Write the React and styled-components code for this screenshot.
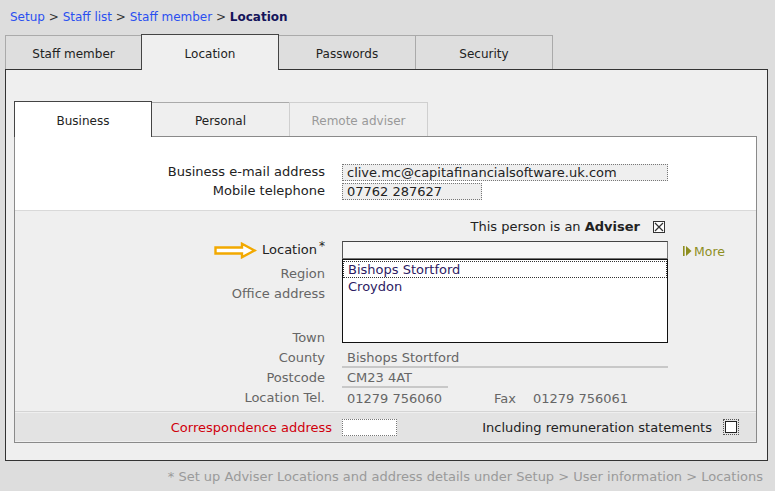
import React from 'react';
import styled, { createGlobalStyle } from 'styled-components';

const GlobalStyle = createGlobalStyle`
  html, body {
    margin: 0;
    padding: 0;
    background: #dddddd;
  }
  body {
    font-family: "DejaVu Sans", Verdana, sans-serif;
    font-size: 13px;
    color: #222;
  }
`;

const Page = styled.div`
  width: 775px;
  height: 491px;
  box-sizing: border-box;
  padding: 0 7px 0 5px;
  display: flex;
  flex-direction: column;
`;

const Crumbs = styled.div`
  padding: 9px 0 0 5px;
  height: 25px;
  line-height: 16px;
  font-size: 12px;
  color: #333;
  a {
    color: #2a4ff0;
    text-decoration: none;
  }
  b {
    color: #14145a;
  }
`;

const TabRow = styled.div`
  display: flex;
  align-items: flex-end;
  height: 36px;
  margin-bottom: -1px;
`;

const Tab = styled.div`
  box-sizing: border-box;
  width: ${p => p.$w || 137}px;
  height: ${p => (p.$active ? 36 : 34)}px;
  margin-bottom: ${p => (p.$active ? 0 : 1)}px;
  padding-top: ${p => (p.$active ? 2 : 2)}px;
  display: flex;
  align-items: center;
  justify-content: center;
  font-size: 12px;
  border: 1px solid ${p => (p.$active ? '#444' : p.$disabled ? '#cfcfcf' : '#aaa')};
  border-bottom: none;
  margin-left: ${p => (p.$first ? 0 : -1)}px;
  background: ${p => p.$bg};
  color: ${p => (p.$disabled ? '#999' : '#222')};
  position: relative;
  z-index: ${p => (p.$active ? 2 : 1)};
`;

const OuterPanel = styled.div`
  box-sizing: border-box;
  height: 392px;
  border: 1px solid #333;
  background: #efefef;
  padding: 31px 10px 17px 8px;
  display: flex;
  flex-direction: column;
`;

const InnerPanel = styled.div`
  border: 1px solid #8a8a8a;
  background: #efefef;
  display: flex;
  flex-direction: column;
  flex: 1;
`;

const WhiteSection = styled.div`
  background: #fff;
  padding: 25px 0 12px;
  border-bottom: 1px solid #d9d9d9;
  display: flex;
  flex-direction: column;
  gap: 2px;
`;

const GraySection = styled.div`
  padding: 6px 0 3px;
  border-bottom: 1px solid #d4d4d4;
  display: flex;
  flex-direction: column;
`;

const Row = styled.div`
  display: grid;
  grid-template-columns: 310px 326px 1fr;
  column-gap: 17px;
  align-items: ${p => p.$align || 'center'};
  height: ${p => p.$h || 20}px;
  margin-bottom: ${p => p.$mb || 0}px;
`;

const Label = styled.div`
  text-align: right;
  line-height: 20px;
  color: ${p => p.$color || '#222'};
`;

const Marked = styled.span`
  position: relative;
  sup {
    font-size: 12px;
    line-height: 0;
    vertical-align: 0;
    position: relative;
    top: -4px;
    margin-left: 2px;
  }
`;

const Field = styled.div`
  position: relative;
  display: flex;
  align-items: center;
  height: 100%;
`;

const TextBox = styled.div`
  box-sizing: border-box;
  width: ${p => p.$w}px;
  height: 17px;
  line-height: 15px;
  padding: 0 4px;
  border: 1px dotted #777;
  background: ${p => p.$bg || '#efefef'};
  color: #222;
  white-space: nowrap;
`;

const SelectBox = styled.div`
  box-sizing: border-box;
  width: 326px;
  height: 18px;
  border: 1px solid #777;
  border-top-color: #444;
  border-left-color: #555;
  background: #f6f6f6;
`;

const Listbox = styled.div`
  position: absolute;
  top: 19px;
  left: 0;
  z-index: 3;
  box-sizing: border-box;
  width: 326px;
  height: 84px;
  padding-top: 1px;
  background: #fff;
  border: 1px solid #111;
  color: #2d1b63;
`;

const Option = styled.div`
  height: 17px;
  line-height: 17px;
  padding: 0 5px;
  outline: ${p => (p.$focus ? '1px dotted #333' : 'none')};
  outline-offset: -1px;
`;

const Value = styled.div`
  box-sizing: border-box;
  width: ${p => p.$w || 326}px;
  line-height: 17px;
  padding: 0 5px;
  color: #666;
  border-bottom: ${p => (p.$line ? '2px solid #c8c8c8' : 'none')};
  white-space: nowrap;
`;

const TelLine = styled.div`
  display: flex;
  align-items: center;
  color: #666;
  padding-left: 5px;
  white-space: nowrap;
  span:first-child {
    width: 147px;
  }
  span:nth-child(2) {
    width: 39px;
  }
`;

const AdviserLine = styled.div`
  grid-column: 1 / 3;
  justify-self: end;
  display: flex;
  align-items: center;
  gap: 13px;
  margin-right: 3px;
  line-height: 20px;
`;

const XBox = styled.span`
  width: 12px;
  height: 12px;
  display: inline-flex;
`;

const More = styled.div`
  display: flex;
  align-items: center;
  gap: 2px;
  color: #8e8e1e;
  margin-left: -2px;
  padding-top: 2px;
  font-size: 12.5px;
`;

const Arrow = styled.svg`
  position: absolute;
  right: calc(100% + 5px);
  top: 0px;
`;

const Band = styled.div`
  height: 28px;
  margin-top: 1px;
  background: #e3e3e3;
  display: flex;
  align-items: center;
  padding-right: 17px;
`;

const BandLabel = styled.div`
  width: 317px;
  text-align: right;
  color: #d0000c;
  margin-right: 10px;
`;

const Spacer = styled.div`
  flex: 1;
`;

const CheckBox = styled.div`
  box-sizing: border-box;
  width: 16px;
  height: 16px;
  margin-left: 11px;
  border: 1px dotted #555;
  padding: 1px;
  div {
    width: 100%;
    height: 100%;
    box-sizing: border-box;
    border: 1px solid #222;
    background: #fff;
  }
`;

const Footer = styled.div`
  margin-top: 8px;
  text-align: right;
  padding-right: 5px;
  line-height: 16px;
  color: #9a9a9a;
`;

const outerTabs = ['Staff member', 'Location', 'Passwords', 'Security'];

export default function App() {
  return (
    <>
      <GlobalStyle />
      <Page>
        <Crumbs>
          <a href="#s">Setup</a> &gt; <a href="#l">Staff list</a> &gt;{' '}
          <a href="#m">Staff member</a> &gt; <b>Location</b>
        </Crumbs>
        <TabRow>
          {outerTabs.map((t, i) => (
            <Tab
              key={t}
              $first={i === 0}
              $active={t === 'Location'}
              $w={i === 0 ? 137 : 138}
              $bg={t === 'Location' ? '#efefef' : '#dedede'}
            >
              {t}
            </Tab>
          ))}
        </TabRow>
        <OuterPanel>
          <TabRow>
            <Tab $first $active $bg="#fff" $w={138}>Business</Tab>
            <Tab $bg="#efefef" $w={139}>Personal</Tab>
            <Tab $bg="#efefef" $w={139} $disabled>Remote adviser</Tab>
          </TabRow>
          <InnerPanel>
            <WhiteSection>
              <Row $h={17}>
                <Label>Business e-mail address</Label>
                <Field>
                  <TextBox $w={326}>clive.mc@capitafinancialsoftware.uk.com</TextBox>
                </Field>
              </Row>
              <Row $h={17}>
                <Label>Mobile telephone</Label>
                <Field>
                  <TextBox $w={140}>07762 287627</TextBox>
                </Field>
              </Row>
            </WhiteSection>
            <GraySection>
              <Row $mb={3}>
                <AdviserLine>
                  <span>
                    This person is an <b>Adviser</b>
                  </span>
                  <XBox>
                    <svg width="12" height="12" viewBox="0 0 12 12">
                      <rect x="0.5" y="0.5" width="11" height="11" fill="#fff" stroke="#333" />
                      <path d="M2 2 L10 10 M10 2 L2 10" stroke="#333" strokeWidth="1.2" />
                    </svg>
                  </XBox>
                </AdviserLine>
              </Row>
              <Row $mb={4}>
                <Label>
                  <Marked>
                    <Arrow width="43" height="17" viewBox="0 0 43 17">
                      <path
                        d="M1.5 5.5 H28 V1.8 L40.5 8.5 L28 15.2 V11.5 H1.5 Z"
                        fill="#fff"
                        stroke="#f2a900"
                        strokeWidth="2.4"
                      />
                    </Arrow>
                    Location<sup>*</sup>
                  </Marked>
                </Label>
                <Field>
                  <SelectBox />
                  <Listbox>
                    <Option $focus>Bishops Stortford</Option>
                    <Option>Croydon</Option>
                  </Listbox>
                </Field>
                <More>
                  <svg width="9" height="10" viewBox="0 0 9 10">
                    <rect x="0" y="0" width="1.6" height="10" fill="#8e8e1e" />
                    <path d="M3 0 L8.5 5 L3 10 Z" fill="#8e8e1e" />
                  </svg>
                  More
                </More>
              </Row>
              <Row>
                <Label $color="#666">Region</Label>
              </Row>
              <Row $h={44} $align="start">
                <Label $color="#666">Office address</Label>
              </Row>
              <Row>
                <Label $color="#666">Town</Label>
              </Row>
              <Row>
                <Label $color="#666">County</Label>
                <Field>
                  <Value $line>Bishops Stortford</Value>
                </Field>
              </Row>
              <Row>
                <Label $color="#666">Postcode</Label>
                <Field>
                  <Value $line $w={106}>CM23 4AT</Value>
                </Field>
              </Row>
              <Row>
                <Label $color="#666">Location Tel.</Label>
                <TelLine>
                  <span>01279 756060</span>
                  <span>Fax</span>
                  <span>01279 756061</span>
                </TelLine>
              </Row>
            </GraySection>
            <Band>
              <BandLabel>Correspondence address</BandLabel>
              <TextBox $w={55} $bg="#fff" />
              <Spacer />
              <span>Including remuneration statements</span>
              <CheckBox>
                <div />
              </CheckBox>
            </Band>
          </InnerPanel>
        </OuterPanel>
        <Footer>
          * Set up Adviser Locations and address details under Setup &gt; User information &gt; Locations
        </Footer>
      </Page>
    </>
  );
}
